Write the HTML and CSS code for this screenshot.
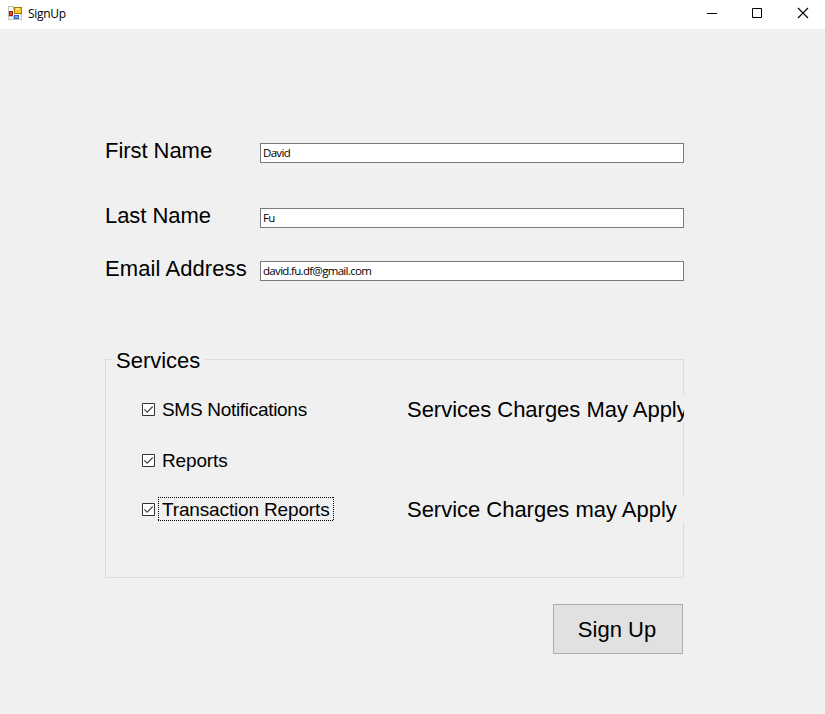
FILE: index.html
```html
<!DOCTYPE html>
<html lang="en">
<head>
<meta charset="utf-8">
<title>SignUp</title>
<link rel="stylesheet" href="styles.css">
</head>
<body>
<header class="titlebar">
  <svg class="app-icon" width="14" height="14" viewBox="0 0 14 14" shape-rendering="crispEdges">
    <path fill="#c3c3c3" d="M0 0h6v4H0zM0 4h1v10H0zM1 10h5v4H1zM12 8h2v6h-2zM6 13h6v1H6z"/>
    <path fill="#f5f5f5" d="M1 1h4v3H1zM1 11h4v2H1zM12 9h1v4h-1z"/>
    <path fill="#9a1a10" d="M1 5h4v5H1z"/><path fill="#e0533f" d="M2 6h2v3H2z"/>
    <path fill="#a87800" d="M6 1h8v7H6z"/><path fill="#ffc726" d="M7 2h6v5H7z"/><path fill="#ffe58a" d="M8 2h3v2H8z"/>
    <path fill="#2f62c8" d="M6 9h5v4H6z"/><path fill="#78a7f5" d="M7 10h3v2H7z"/>
  </svg>
  <span class="title">SignUp</span>
  <div class="controls">
    <svg width="45" height="28" viewBox="0 0 45 28"><path d="M17 13.5h10" stroke="#000"/></svg>
    <svg width="45" height="28" viewBox="0 0 45 28"><path d="M17.500 8.500h9v9h-9z" stroke="#000" fill="none"/></svg>
    <svg width="45" height="28" viewBox="0 0 45 28"><path d="M18 8l10 10M28 8l-10 10" stroke="#000" stroke-width="1.100"/></svg>
  </div>
</header>
<form class="form">
  <label class="row first"><span class="label">First Name</span><span class="field">David</span></label>
  <label class="row last"><span class="label">Last Name</span><span class="field">Fu</span></label>
  <label class="row"><span class="label label-email">Email Address</span><span class="field">david.fu.df@gmail.com</span></label>
  <section class="group">
    <h2 class="legend"><span>Services</span></h2>
    <div class="service sms">
      <svg class="check" width="13" height="13" viewBox="0 0 13 13"><path d="M.5.5h12v12H.5z" fill="#fff" stroke="#333"/><path d="M2.300 6.300l2.900 2.900 5.500-5.700" fill="none" stroke="#444" stroke-width="1.200"/></svg>
      <span class="name name-sms">SMS Notifications</span>
      <span class="note">Services Charges May Apply</span>
    </div>
    <div class="service reports">
      <svg class="check" width="13" height="13" viewBox="0 0 13 13"><path d="M.5.5h12v12H.5z" fill="#fff" stroke="#333"/><path d="M2.300 6.300l2.900 2.900 5.500-5.700" fill="none" stroke="#444" stroke-width="1.200"/></svg>
      <span class="name">Reports</span>
    </div>
    <div class="service">
      <svg class="check" width="13" height="13" viewBox="0 0 13 13"><path d="M.5.5h12v12H.5z" fill="#fff" stroke="#333"/><path d="M2.300 6.300l2.900 2.900 5.500-5.700" fill="none" stroke="#444" stroke-width="1.200"/></svg>
      <span class="name">Transaction Reports<svg class="focus" width="176" height="24"><path d="M0 .5h176M0 23.500h176M.5 0v24M175.500 0v24" stroke="#000" stroke-dasharray="1 1"/></svg></span>
      <span class="note">Service Charges may Apply</span>
    </div>
  </section>
  <button class="submit" type="button">Sign Up</button>
</form>
</body>
</html>
```
FILE: styles.css
```css
* { box-sizing: border-box; }
body {
  margin: 0;
  height: 714px;
  overflow: hidden;
  background: #f0f0f0;
  color: #000;
  font-family: "Liberation Sans", Arial, sans-serif;
}
.titlebar {
  display: flex;
  align-items: flex-start;
  height: 29px;
  padding-left: 8px;
  background: #fff;
}
.app-icon { margin-top: 6px; }
.title {
  margin-left: 6px;
  font: 12px/28px "Open Sans", sans-serif;
  letter-spacing: -0.3px;
}
.controls { display: flex; margin-left: auto; }
.controls svg { display: block; }
.form {
  display: flex;
  flex-direction: column;
  width: 579px;
  margin: 114px 0 0 105px;
}
.row { display: flex; height: 20px; }
.first { margin-bottom: 45px; }
.last { margin-bottom: 33px; }
.label {
  width: 155px;
  margin-top: -5px;
  font-size: 22px;
  line-height: 26px;
  letter-spacing: -0.05px;
  white-space: nowrap;
}
.label-email { letter-spacing: 0.09px; }
.field {
  width: 424px;
  height: 20px;
  padding-left: 2px;
  border: 1px solid #7a7a7a;
  background: #fff;
  font: 11.5px/18px "Open Sans", sans-serif;
  letter-spacing: -0.68px;
}
.group {
  height: 219px;
  margin-top: 78px;
  border: 1px solid #dcdcdc;
}
.legend {
  height: 26px;
  margin: -12px 0 0 6px;
  font-size: 22px;
  font-weight: 400;
  line-height: 26px;
}
.legend span {
  display: inline-block;
  width: 93px;
  padding-left: 4px;
  background: #f0f0f0;
}
.service {
  display: flex;
  align-items: center;
  height: 26px;
  margin: 0 -1px 0 36px;
}
.sms { margin-top: 22px; margin-bottom: 25px; }
.reports { margin-bottom: 23px; }
.check { flex: none; }
.name {
  position: relative;
  width: 248px;
  height: 24px;
  margin-left: 7px;
  font-size: 19px;
  line-height: 26px;
  letter-spacing: -0.15px;
  white-space: nowrap;
}
.name-sms { letter-spacing: -0.3px; }
.focus { position: absolute; left: -4px; top: 0; }
.note {
  flex: 1;
  min-width: 0;
  height: 26px;
  margin-left: -3px;
  overflow: hidden;
  background: #f0f0f0;
  font-size: 22px;
  line-height: 28px;
  letter-spacing: -0.02px;
  white-space: nowrap;
}
.submit {
  align-self: flex-end;
  width: 130px;
  height: 50px;
  margin: 26px 1px 0 0;
  padding: 2px 2px 0 0;
  border: 1px solid #adadad;
  background: #e1e1e1;
  color: #000;
  font: 22px "Liberation Sans", Arial, sans-serif;
}
```
